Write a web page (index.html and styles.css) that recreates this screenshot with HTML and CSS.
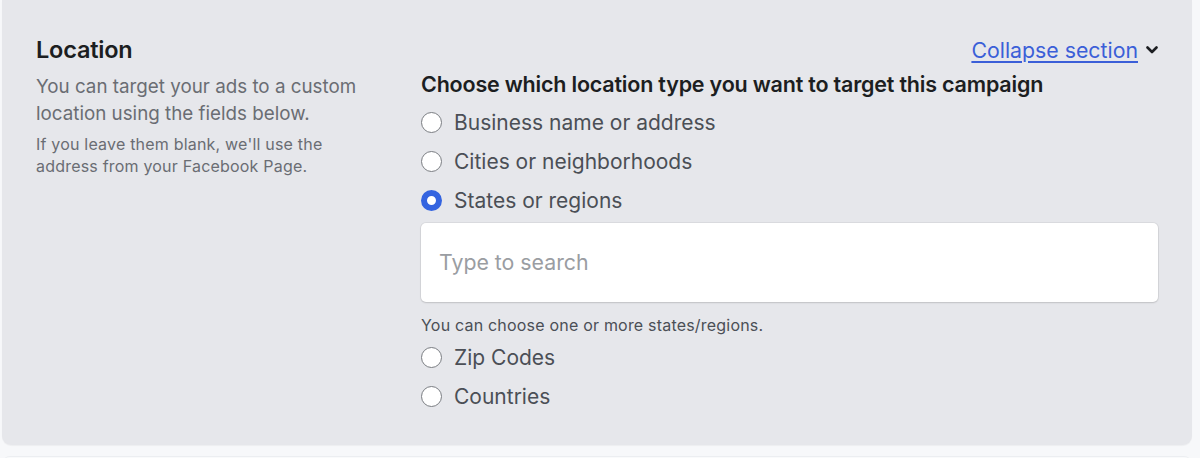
FILE: index.html
```html
<!DOCTYPE html>
<html lang="en">
<head>
<meta charset="utf-8">
<title>Location</title>
<link rel="stylesheet" href="styles.css">
</head>
<body>
<div class="page">
  <section class="card">
    <div class="side">
      <h2 class="title">Location</h2>
      <p class="desc">You can target your ads to a custom location using the fields below.</p>
      <p class="note">If you leave them blank, we'll use the address from your Facebook Page.</p>
    </div>
    <div class="main">
      <div class="collapse-row">
        <a class="collapse" href="#">Collapse section</a>
        <svg class="chev" viewBox="0 0 12 8" width="12" height="8"><path d="M1.5 1.5 L6 6 L10.5 1.5" fill="none" stroke="#1c1e21" stroke-width="2.6" stroke-linecap="round" stroke-linejoin="round"/></svg>
      </div>
      <h3 class="question">Choose which location type you want to target this campaign</h3>
      <ul class="options">
        <li class="option"><span class="radio"></span><span class="label">Business name or address</span></li>
        <li class="option"><span class="radio"></span><span class="label">Cities or neighborhoods</span></li>
        <li class="option"><span class="radio checked"></span><span class="label">States or regions</span></li>
      </ul>
      <div class="search">Type to search</div>
      <p class="hint">You can choose one or more states/regions.</p>
      <ul class="options">
        <li class="option"><span class="radio"></span><span class="label">Zip Codes</span></li>
        <li class="option"><span class="radio"></span><span class="label">Countries</span></li>
      </ul>
    </div>
  </section>
  <div class="next"></div>
</div>
</body>
</html>
```
FILE: styles.css
```css
* { box-sizing: border-box; }
html, body { margin: 0; padding: 0; }
body {
  background: #f7f8fa;
  font-family: "Inter", "Liberation Sans", Arial, sans-serif;
  width: 1200px;
  height: 458px;
  overflow: hidden;
}
.page {
  display: flex;
  flex-direction: column;
  gap: 11px;
  padding: 0 8px 0 2px;
}
.card {
  height: 445px;
  background: #e6e7eb;
  border-radius: 0 0 9px 9px;
  box-shadow: 0 1px 1px rgba(0,0,0,0.04);
  display: flex;
  padding: 0 34px 0 34px;
}
.side {
  width: 385px;
  flex: none;
  padding-top: 36px;
}
.title {
  margin: 0;
  font-size: 23.5px;
  font-weight: 600;
  color: #1c1e21;
  line-height: 28px;
  letter-spacing: -0.2px;
}
.desc {
  margin: 9px 0 0;
  font-size: 18.8px;
  line-height: 27px;
  color: #6a6d73;
  width: 340px;
}
.note {
  margin: 6px 0 0;
  font-size: 16px;
  line-height: 22px;
  color: #6a6d73;
  width: 310px;
  letter-spacing: 0.2px;
}
.main {
  flex: 1;
  display: flex;
  flex-direction: column;
  padding-top: 36px;
}
.collapse-row {
  display: flex;
  justify-content: flex-end;
  align-items: center;
  gap: 8px;
  height: 28px;
}
.collapse {
  color: #3b5fd8;
  font-size: 21.3px;
  text-decoration: underline;
  text-underline-offset: 3px;
  text-decoration-thickness: 1.5px;
}
.question {
  margin: 5px 0 3.5px;
  font-size: 21.5px;
  font-weight: 600;
  color: #1c1e21;
  line-height: 30px;
  letter-spacing: -0.2px;
}
.options {
  list-style: none;
  margin: 0;
  padding: 0;
  display: flex;
  flex-direction: column;
}
.option {
  display: flex;
  align-items: center;
  gap: 12px;
  height: 39px;
}
.radio {
  width: 21px;
  height: 21px;
  border-radius: 50%;
  background: #fff;
  border: 1.5px solid #7a7d82;
  flex: none;
}
.radio.checked {
  border: 6px solid #3464e0;
  background: #fff;
}
.label {
  font-size: 21px;
  color: #4b4f56;
}
.search {
  margin-top: 3px;
  height: 79px;
  background: #fff;
  border-radius: 5px;
  box-shadow: 0 0 0 1px rgba(0,0,0,0.05), 0 1px 2px rgba(0,0,0,0.12);
  display: flex;
  align-items: center;
  padding: 0 18px;
  font-size: 21.3px;
  color: #9a9da2;
}
.hint {
  margin: 13px 0 3.5px;
  font-size: 16px;
  color: #4b4f56;
  line-height: 20px;
  letter-spacing: 0.2px;
}
.next {
  height: 20px;
  background: #f9fafb;
  border-top: 1px solid #eceef1;
  border-radius: 8px 8px 0 0;
}
```
